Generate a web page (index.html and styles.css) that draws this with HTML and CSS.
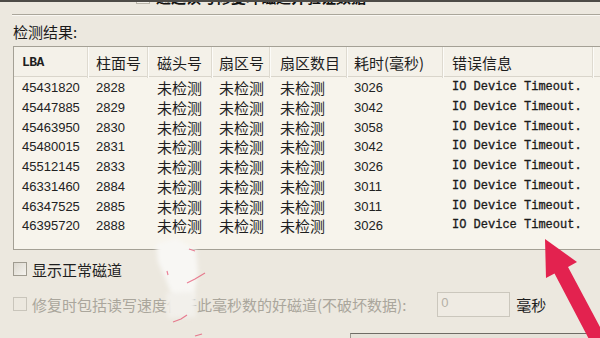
FILE: index.html
```html
<!DOCTYPE html>
<html lang="zh">
<head>
<meta charset="utf-8">
<link rel="stylesheet" href="styles.css">
</head>
<body>
<div class="page">
  <div class="topcut">
    <div class="topline"><span class="tcb"></span><span>通过读写修复坏磁道并验证数据</span></div>
  </div>
  <div class="sep"></div>
  <div class="label">检测结果:</div>
  <div class="list">
    <div class="row head">
      <div>LBA</div><div>柱面号</div><div>磁头号</div><div>扇区号</div><div>扇区数目</div><div>耗时(毫秒)</div><div>错误信息</div><div></div>
    </div>
    <div class="row"><div class="num">45431820</div><div class="num">2828</div><div>未检测</div><div>未检测</div><div>未检测</div><div class="num">3026</div><div class="mono">IO Device Timeout.</div><div></div></div>
    <div class="row"><div class="num">45447885</div><div class="num">2829</div><div>未检测</div><div>未检测</div><div>未检测</div><div class="num">3042</div><div class="mono">IO Device Timeout.</div><div></div></div>
    <div class="row"><div class="num">45463950</div><div class="num">2830</div><div>未检测</div><div>未检测</div><div>未检测</div><div class="num">3058</div><div class="mono">IO Device Timeout.</div><div></div></div>
    <div class="row"><div class="num">45480015</div><div class="num">2831</div><div>未检测</div><div>未检测</div><div>未检测</div><div class="num">3042</div><div class="mono">IO Device Timeout.</div><div></div></div>
    <div class="row"><div class="num">45512145</div><div class="num">2833</div><div>未检测</div><div>未检测</div><div>未检测</div><div class="num">3026</div><div class="mono">IO Device Timeout.</div><div></div></div>
    <div class="row"><div class="num">46331460</div><div class="num">2884</div><div>未检测</div><div>未检测</div><div>未检测</div><div class="num">3011</div><div class="mono">IO Device Timeout.</div><div></div></div>
    <div class="row"><div class="num">46347525</div><div class="num">2885</div><div>未检测</div><div>未检测</div><div>未检测</div><div class="num">3011</div><div class="mono">IO Device Timeout.</div><div></div></div>
    <div class="row"><div class="num">46395720</div><div class="num">2888</div><div>未检测</div><div>未检测</div><div>未检测</div><div class="num">3026</div><div class="mono">IO Device Timeout.</div><div></div></div>
  </div>
  <div class="opt opt1"><span class="cb"></span><span>显示正常磁道</span></div>
  <div class="opt opt2 disabled"><span class="cb"></span><span>修复时包括读写速度低于此毫秒数的好磁道(不破坏数据):</span><span class="input">0</span><span class="unit">毫秒</span></div>
  <div class="btnedge"></div>

  <svg class="overlay" width="600" height="338" viewBox="0 0 600 338">
    <defs>
      <filter id="blur" x="-30%" y="-30%" width="160%" height="160%"><feGaussianBlur stdDeviation="2"/></filter>
      <filter id="blur2"><feGaussianBlur stdDeviation="0.6"/></filter>
    </defs>
    <polygon points="156,244 176,238 196,250 198,272 194,296 186,312 176,306 166,280 158,262" fill="#f8f7f4" filter="url(#blur)"/>
    <polygon points="166,293 194,292 196,317 168,318" fill="#f2f0eb" filter="url(#blur)"/>
    <g stroke="#e0204a" stroke-width="1.2" fill="none" filter="url(#blur2)" opacity="0.55">
      <path d="M189,249 l6,2"/>
      <path d="M187,283 l8,-4 l10,-6"/>
      <path d="M173,322 l8,-3 l6,-4"/>
      <path d="M195,336 l7,-2"/>
      <path d="M167,271 l1,4"/>
    </g>
    <polygon points="545,239 577,262 568,267 616,357 602,364 554.5,273.5 546,278" fill="#e3234f" filter="url(#blur2)"/>
  </svg>
</div>
</body>
</html>
```
FILE: styles.css
```css
html, body {
  margin: 0;
  padding: 0;
}
body {
  background: #ece8df;
  font-family: "Noto Sans CJK SC", "Liberation Sans", sans-serif;
  color: #1e1e1e;
}
.page {
  position: relative;
  width: 600px;
  height: 338px;
  overflow: hidden;
  background: #ece8df;
}
.topcut {
  height: 5px;
  overflow: hidden;
  border-top: 2px solid #4d4b47;
  box-sizing: border-box;
}
.topline {
  display: flex;
  align-items: center;
  gap: 6px;
  margin-top: -14px;
  padding-left: 136px;
  font-size: 15px;
  line-height: 18px;
  color: #111;
  font-weight: bold;
}
.tcb {
  width: 12px;
  height: 12px;
  border: 1px solid #b9b5aa;
  background: #f4f1ea;
}
.sep {
  margin-top: 9px;
  margin-left: 12px;
  border-top: 1px solid #aaa69b;
  border-bottom: 1px solid #faf8f3;
}
.label {
  margin-top: 7px;
  margin-left: 13px;
  font-size: 15px;
  line-height: 18px;
  height: 18px;
  color: #1a1a1a;
}
.list {
  margin-top: 5px;
  margin-left: 13px;
  width: 600px;
  height: 204px;
  border: 1px solid #a4a095;
  border-right: none;
  background: #f7f4ec;
  box-sizing: border-box;
}
.row {
  display: grid;
  grid-template-columns: 74px 60px 64px 58px 77px 96px 150px 1fr;
  height: 19.75px;
  align-items: center;
  font-size: 15px;
}
.row > div {
  padding-left: 8px;
  white-space: nowrap;
  line-height: 19.75px;
}
.row.head {
  height: 29px;
  background: #f4f1e9;
  border-bottom: 1px solid #d9d5cb;
  align-items: stretch;
  margin-bottom: 1px;
}
.row.head > div {
  line-height: 31px;
  border-right: 1px solid #dedad0;
  box-shadow: 1px 0 0 #fcfbf8;
  color: #1e1e1e;
}
.row.head > div:first-child {
  font-family: "Liberation Mono", monospace;
  font-weight: bold;
  font-size: 13px;
  letter-spacing: -0.5px;
}
.row > div:nth-child(1) { padding-left: 8px; }
.row > div:nth-child(3) { padding-left: 9px; }
.row > div:nth-child(4) { padding-left: 7px; }
.row > div:nth-child(5) { padding-left: 10px; }
.row > div:nth-child(6) { padding-left: 7px; }
.row > div:nth-child(7) { padding-left: 9px; }
.num {
  font-family: "Liberation Sans", sans-serif;
  font-size: 13px;
  color: #222;
}
.mono {
  font-family: "Liberation Mono", monospace;
  font-size: 12px;
  color: #1a1a1a;
  -webkit-text-stroke: 0.3px #1a1a1a;
}
.opt {
  display: flex;
  align-items: center;
  margin-left: 13px;
  font-size: 15px;
}
.opt1 {
  margin-top: 9px;
  height: 20px;
}
.opt2 {
  margin-top: 12px;
  height: 26px;
}
.cb {
  width: 12px;
  height: 12px;
  border: 1px solid #9f9b90;
  background: linear-gradient(135deg, #dcd8cf, #f5f3ee);
  margin-right: 5px;
  flex: none;
}
.disabled {
  color: #aaa69c;
}
.disabled .cb {
  border-color: #c9c5bb;
  background: #ece8df;
}
.input {
  margin-left: 31px;
  width: 68px;
  height: 23px;
  border: 1px solid #cbc7bd;
  background: #efebe3;
  font-family: "Liberation Sans", sans-serif;
  font-size: 13px;
  line-height: 19px;
  padding-left: 3px;
  color: #b5b1a7;
  box-sizing: content-box;
}
.unit {
  margin-left: 6px;
  color: #1e1e1e;
}
.btnedge {
  margin-top: 16px;
  margin-left: 350px;
  height: 8px;
  border-top: 1px solid #6f6c65;
  border-left: 1px solid #9a978f;
  background: #e6e2d9;
}
.overlay {
  position: absolute;
  left: 0;
  top: 0;
  pointer-events: none;
}
```
